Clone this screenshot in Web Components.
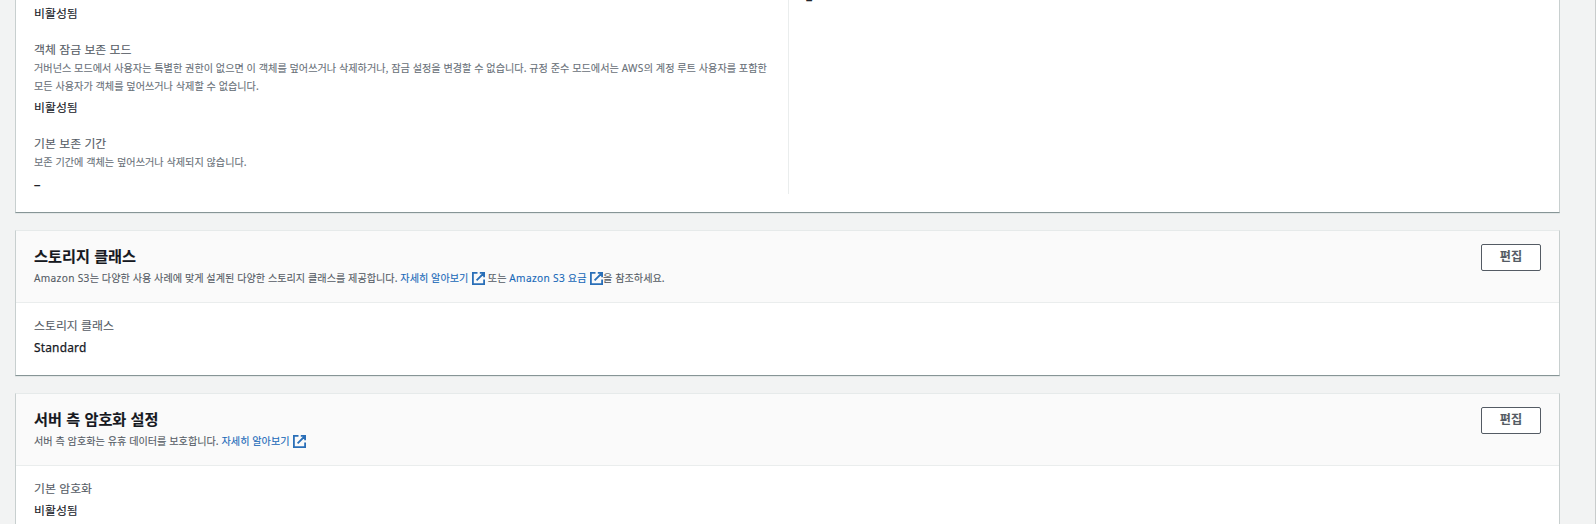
<!DOCTYPE html>
<html lang="ko">
<head>
<meta charset="utf-8">
<title>S3</title>
<style>
html,body{margin:0;height:524px;overflow:hidden}
body{background:#f2f3f3;font-family:"Noto Sans CJK KR","Noto Sans",sans-serif;color:#16191f;-webkit-text-stroke:.1px}
</style>
</head>
<body>
<bucket-page>
  <s3-card class="first">
    <two-columns>
      <s3-field><span slot="value">비활성됨</span></s3-field>
      <s3-field label="객체 잠금 보존 모드"><span slot="desc">거버넌스 모드에서 사용자는 특별한 권한이 없으면 이 객체를 덮어쓰거나 삭제하거나, 잠금 설정을 변경할 수 없습니다. 규정 준수 모드에서는 <latin-text>AWS</latin-text>의 계정 루트 사용자를 포함한<br>모든 사용자가 객체를 덮어쓰거나 삭제할 수 없습니다.</span><span slot="value">비활성됨</span></s3-field>
      <s3-field label="기본 보존 기간"><span slot="desc">보존 기간에 객체는 덮어쓰거나 삭제되지 않습니다.</span><span slot="value" class="dash">–</span></s3-field>
      <span slot="side">–</span>
    </two-columns>
  </s3-card>
  <s3-card heading="스토리지 클래스">
    <span slot="desc"><latin-text>Amazon S3</latin-text>는 다양한 사용 사례에 맞게 설계된 다양한 스토리지 클래스를 제공합니다. <ext-link>자세히 알아보기</ext-link> 또는 <ext-link><latin-text>Amazon S3</latin-text> 요금</ext-link>을 참조하세요.</span>
    <s3-field label="스토리지 클래스"><latin-text slot="value" class="std">Standard</latin-text></s3-field>
  </s3-card>
  <s3-card heading="서버 측 암호화 설정">
    <span slot="desc">서버 측 암호화는 유휴 데이터를 보호합니다. <ext-link>자세히 알아보기</ext-link></span>
    <s3-field label="기본 암호화"><span slot="value">비활성됨</span></s3-field>
  </s3-card>
</bucket-page>
<script>
function define(name, html, setup) {
  customElements.define(name, class extends HTMLElement {
    constructor() {
      super();
      this.attachShadow({mode: 'open'}).innerHTML = html;
    }
    connectedCallback() { if (setup) setup(this, this.shadowRoot); }
  });
}
define('bucket-page', `<style>
:host{display:flex;flex-direction:column;gap:17px;box-sizing:border-box;height:524px;overflow:hidden;padding:0 35px 0 15px;border-right:1px solid #c9cccc}
</style><slot></slot>`);

define('s3-card', `<style>
:host{display:block;flex:none;box-sizing:border-box;background:#fff;border:1px solid #c8cfcf;border-top-color:#e6eaea;border-bottom:1px solid #879596;box-shadow:0 1px 0 #e3e7e7}
:host(.first){border-top:0;height:213px}
:host(:not(.first)){height:146px}
header{display:flex;justify-content:space-between;align-items:flex-start;box-sizing:border-box;height:72px;padding:13px 18px 0;background:#fafafa;border-bottom:1px solid #eaeded}
h2{margin:0 0 3px;font-size:15.2px;line-height:22px;font-weight:700}
.d{font-size:10.15px;line-height:18px;height:18px;color:#545b64;white-space:nowrap}
.body{padding:13px 18px 0}
:host(.first) .body{padding-top:0}
</style><header><div><h2></h2><div class="d"><slot name="desc"></slot></div></div><edit-button></edit-button></header><div class="body"><slot></slot></div>`,
(el, r) => {
  const h = el.getAttribute('heading');
  if (h) r.querySelector('h2').textContent = h;
  else r.querySelector('header')?.remove();
});

define('edit-button', `<style>
:host{display:block}
button{display:block;box-sizing:border-box;width:60px;height:27px;padding:0 0 3px;border:1px solid #545b64;border-radius:2px;background:#fff;color:#545b64;font:700 12.1px/22px "Noto Sans CJK KR",sans-serif}
</style><button>편집</button>`);

define('two-columns', `<style>
:host{display:grid;grid-template-columns:755px 1fr;height:194px}
.l{box-sizing:border-box;height:194px;border-right:1px solid #eaeded;padding-top:3px}
.s{padding-left:17px;font-size:11.8px;line-height:18px;margin-top:-10px;-webkit-text-stroke:.4px}
</style><div class="l"><slot></slot></div><div class="s"><slot name="side"></slot></div>`);

define('s3-field', `<style>
:host{display:block;margin-bottom:18px}
.n{font-size:11.9px;line-height:18px;color:#545b64}
.d{font-size:10.15px;line-height:18px;color:#687078;margin-top:1px;white-space:nowrap}
.v{font-size:11.9px;line-height:19px;margin-top:3px}
.d + .v{margin-top:2px}
:host(:not([label])) .v{margin-top:0}
::slotted(.dash){position:relative;top:1px;-webkit-text-stroke:.4px}
</style><div class="n"></div><div class="d"><slot name="desc"></slot></div><div class="v"><slot name="value"></slot></div>`,
(el, r) => {
  const l = el.getAttribute('label');
  if (l) r.querySelector('.n').textContent = l;
  else r.querySelector('.n')?.remove();
  if (!el.querySelector('[slot=desc]')) r.querySelector('.d')?.remove();
});

define('latin-text', `<style>
:host{display:inline;font-family:"Noto Sans",sans-serif;line-height:0;letter-spacing:.33px}
:host(.std){display:inline-block;line-height:19px;letter-spacing:.2px;-webkit-text-stroke:.25px}
</style><slot></slot>`);

define('ext-link', `<style>
:host{display:inline;color:#1768b8}
svg{width:13px;height:13px;vertical-align:-3px;margin-left:3.6px}
</style><slot></slot><svg viewBox="0 0 13 13" fill="none" stroke="#2a6fb8" stroke-width="1.8"><path d="M5.5.9H.9v11.2h11.2V7.5M7.8.9h4.3v4.3M12 1 4.6 8.4"/></svg>`);
</script>
</body>
</html>
